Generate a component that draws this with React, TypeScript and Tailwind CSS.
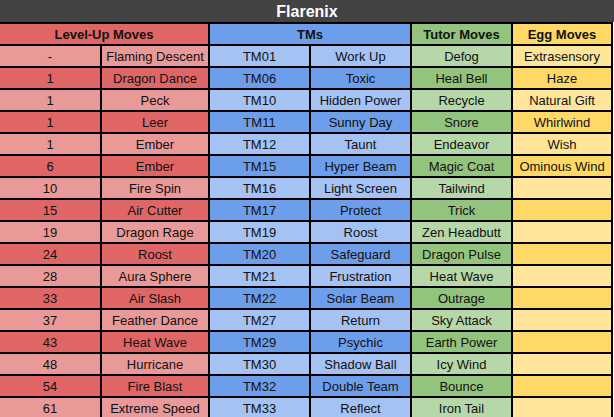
const levelUp: [string, string][] = [
  ['-', 'Flaming Descent'],
  ['1', 'Dragon Dance'],
  ['1', 'Peck'],
  ['1', 'Leer'],
  ['1', 'Ember'],
  ['6', 'Ember'],
  ['10', 'Fire Spin'],
  ['15', 'Air Cutter'],
  ['19', 'Dragon Rage'],
  ['24', 'Roost'],
  ['28', 'Aura Sphere'],
  ['33', 'Air Slash'],
  ['37', 'Feather Dance'],
  ['43', 'Heat Wave'],
  ['48', 'Hurricane'],
  ['54', 'Fire Blast'],
  ['61', 'Extreme Speed'],
];

const tms: [string, string][] = [
  ['TM01', 'Work Up'],
  ['TM06', 'Toxic'],
  ['TM10', 'Hidden Power'],
  ['TM11', 'Sunny Day'],
  ['TM12', 'Taunt'],
  ['TM15', 'Hyper Beam'],
  ['TM16', 'Light Screen'],
  ['TM17', 'Protect'],
  ['TM19', 'Roost'],
  ['TM20', 'Safeguard'],
  ['TM21', 'Frustration'],
  ['TM22', 'Solar Beam'],
  ['TM27', 'Return'],
  ['TM29', 'Psychic'],
  ['TM30', 'Shadow Ball'],
  ['TM32', 'Double Team'],
  ['TM33', 'Reflect'],
];

const tutor = [
  'Defog', 'Heal Bell', 'Recycle', 'Snore', 'Endeavor', 'Magic Coat', 'Tailwind', 'Trick',
  'Zen Headbutt', 'Dragon Pulse', 'Heat Wave', 'Outrage', 'Sky Attack', 'Earth Power',
  'Icy Wind', 'Bounce', 'Iron Tail',
];

const egg = ['Extrasensory', 'Haze', 'Natural Gift', 'Whirlwind', 'Wish', 'Ominous Wind'];

function Cell({ children, className }: { children?: React.ReactNode; className: string }) {
  return (
    <div className={`h-[20px] pt-[1px] flex items-center justify-center whitespace-nowrap overflow-hidden ${className}`}>
      {children}
    </div>
  );
}

export default function App() {
  return (
    <div className="w-[614px] h-[417px] overflow-hidden bg-white text-[13px] leading-[20px] text-[#111]" style={{ fontFamily: '"Liberation Sans", Arial, sans-serif' }}>
      {/* title bar */}
      <div className="h-[22px] pt-[1px] bg-[#434343] flex items-center justify-center text-white font-bold text-[16px]">
        Flarenix
      </div>

      <div className="w-[613px] bg-black pt-[2px] pr-[2px] grid grid-cols-[100px_106px_99px_99px_99px_98px] gap-[2px]">
        {/* header row */}
        <Cell className="col-span-2 bg-[#e06666] font-bold">Level-Up Moves</Cell>
        <Cell className="col-span-2 bg-[#6d9eeb] font-bold">TMs</Cell>
        <Cell className="bg-[#93c47d] font-bold">Tutor Moves</Cell>
        <Cell className="bg-[#ffd966] font-bold">Egg Moves</Cell>

        {levelUp.map((lv, i) => {
          const light = i % 2 === 0;
          return [
            <Cell key={`a${i}`} className={light ? 'bg-[#ea9999]' : 'bg-[#e06666]'}>{lv[0]}</Cell>,
            <Cell key={`b${i}`} className={light ? 'bg-[#ea9999]' : 'bg-[#e06666]'}>{lv[1]}</Cell>,
            <Cell key={`c${i}`} className={light ? 'bg-[#a4c2f4]' : 'bg-[#6d9eeb]'}>{tms[i][0]}</Cell>,
            <Cell key={`d${i}`} className={light ? 'bg-[#a4c2f4]' : 'bg-[#6d9eeb]'}>{tms[i][1]}</Cell>,
            <Cell key={`e${i}`} className={light ? 'bg-[#b6d7a8]' : 'bg-[#93c47d]'}>{tutor[i]}</Cell>,
            <Cell key={`f${i}`} className={light ? 'bg-[#ffe599]' : 'bg-[#ffd966]'}>{egg[i] ?? ''}</Cell>,
          ];
        })}
      </div>
    </div>
  );
}
